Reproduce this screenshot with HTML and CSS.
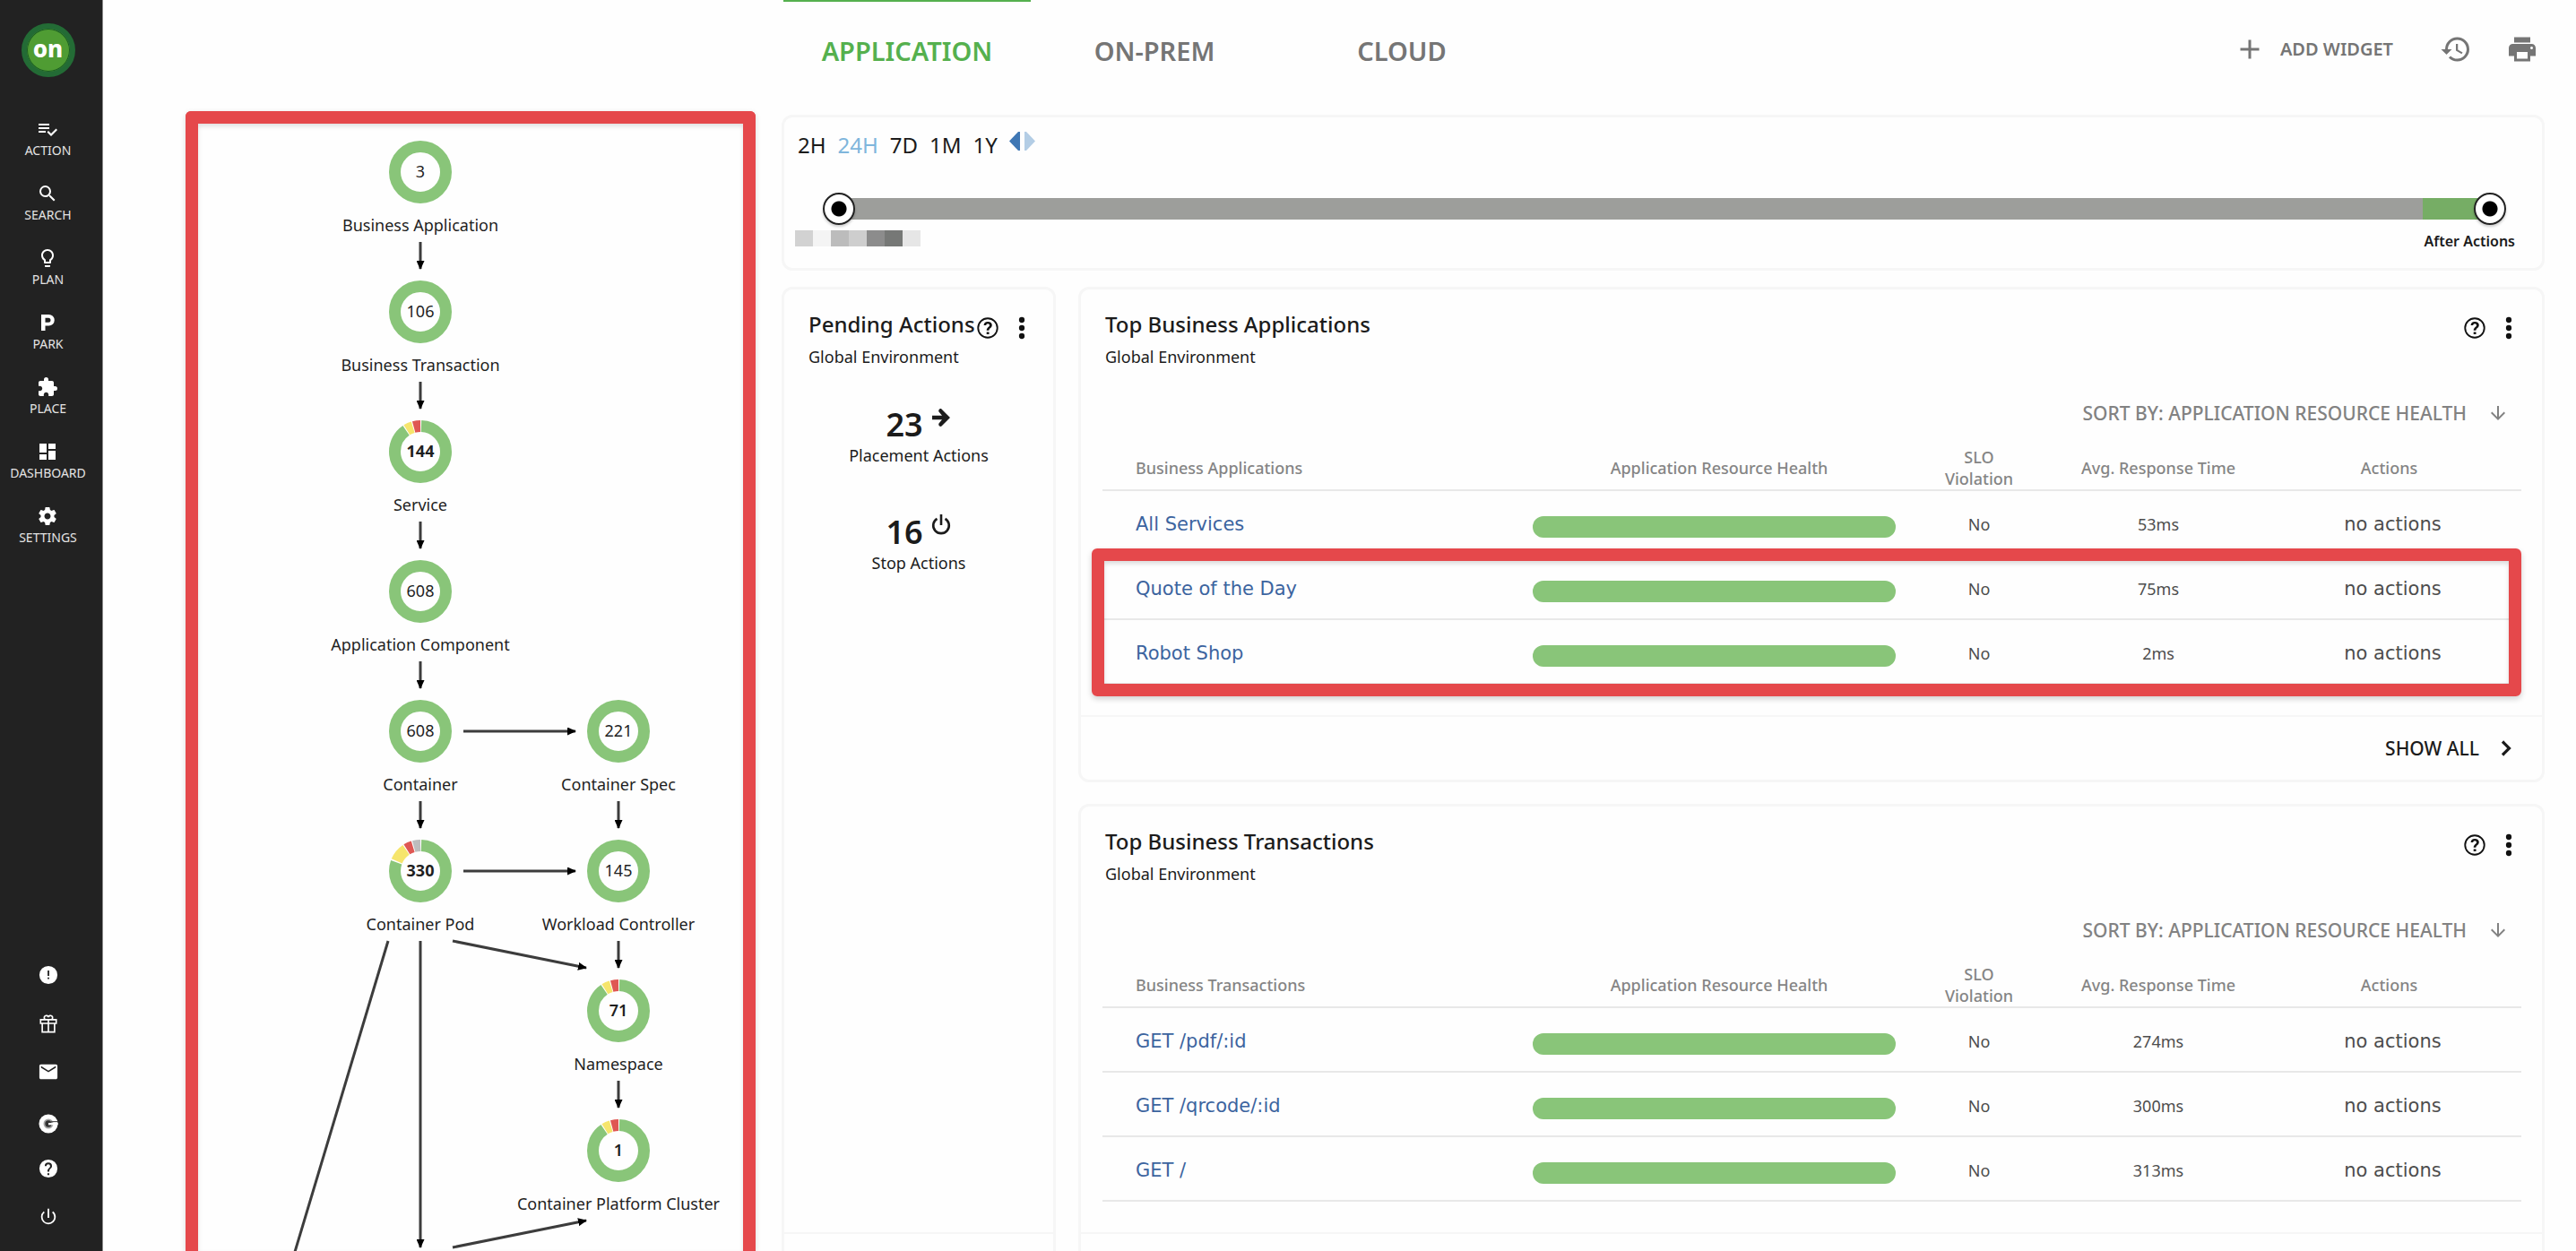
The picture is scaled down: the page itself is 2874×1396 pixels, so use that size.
FILE: index.html
```html
<!DOCTYPE html>
<html lang="en">
<head>
<meta charset="utf-8">
<meta name="viewport" content="width=device-width, initial-scale=1">
<title>Application dashboard</title>
<link rel="stylesheet" href="styles.css">
</head>
<body>
<svg class="defs" width="0" height="0" aria-hidden="true">
  <symbol id="i-help" viewBox="0 0 24 24"><path d="M12 2a10 10 0 1 0 0 20 10 10 0 0 0 0-20zm0 18.400a8.400 8.400 0 1 1 0-16.800 8.400 8.400 0 0 1 0 16.800z"/><path d="M10.900 15.800h2.400v2.200h-2.400zM12.100 6C9.800 6 8.200 7.400 8.200 9.500h2.300c0-1 .6-1.600 1.600-1.600s1.600.6 1.600 1.500c0 1.700-2.800 1.900-2.800 5h2.300c0-2 2.900-2.400 2.900-5.100C16.100 7.300 14.500 6 12.100 6z"/></symbol>
  <symbol id="i-more" viewBox="0 0 24 24"><circle cx="12" cy="6" r="2.100"/><circle cx="12" cy="12" r="2.100"/><circle cx="12" cy="18" r="2.100"/></symbol>
  <symbol id="i-down" viewBox="0 0 24 24"><path d="M20 12l-1.410-1.410L13 16.170V4h-2v12.170l-5.580-5.590L4 12l8 8 8-8z"/></symbol>
  <symbol id="i-next" viewBox="0 0 24 24"><path d="M8 4.500l7.500 7.500L8 19.500" fill="none" stroke="currentColor" stroke-width="3.200"/></symbol>
  <symbol id="ring" viewBox="-35 -35 70 70"><circle r="28.500" fill="none" stroke="#89c579" stroke-width="13"/></symbol>
  <symbol id="ring-warn" viewBox="-35 -35 70 70">
    <g fill="none" stroke-width="13" transform="rotate(-90)">
      <circle r="28.500" pathLength="360" stroke="#89c579" stroke-dasharray="324 36" stroke-dashoffset="-2"/>
      <circle r="28.500" pathLength="360" stroke="#f6e56c" stroke-dasharray="15 345" stroke-dashoffset="-328"/>
      <circle r="28.500" pathLength="360" stroke="#df5753" stroke-dasharray="15 345" stroke-dashoffset="-345"/>
    </g>
  </symbol>
  <symbol id="ring-pod" viewBox="-35 -35 70 70">
    <g fill="none" stroke-width="13" transform="rotate(-90)">
      <circle r="28.500" pathLength="360" stroke="#89c579" stroke-dasharray="288 72" stroke-dashoffset="-2"/>
      <circle r="28.500" pathLength="360" stroke="#f6e56c" stroke-dasharray="33 327" stroke-dashoffset="-293"/>
      <circle r="28.500" pathLength="360" stroke="#df5753" stroke-dasharray="15 345" stroke-dashoffset="-328"/>
      <circle r="28.500" pathLength="360" stroke="#bdbdbd" stroke-dasharray="15 345" stroke-dashoffset="-345"/>
    </g>
  </symbol>
</svg>

<div class="shell">
  <aside class="sidebar">
    <a class="logo" href="#" aria-label="Home"><span class="logo-text">on</span></a>
    <nav class="nav">
      <a class="nav-item" href="#"><svg viewBox="0 0 24 24"><path d="M14 10H2v2h12v-2zm0-4H2v2h12V6zM2 16h8v-2H2v2zm19.500-4.500L23 13l-6.990 7-4.510-4.500L13 14l3.010 3 5.490-5.500z"/></svg>ACTION</a>
      <a class="nav-item" href="#"><svg viewBox="0 0 24 24"><path d="M15.500 14h-.79l-.28-.27A6.470 6.470 0 0 0 16 9.500 6.500 6.500 0 1 0 9.500 16c1.610 0 3.090-.59 4.230-1.570l.27.28v.79l5 4.990L20.490 19l-4.990-5zm-6 0C7.010 14 5 11.990 5 9.500S7.010 5 9.500 5 14 7.010 14 9.500 11.990 14 9.500 14z"/></svg>SEARCH</a>
      <a class="nav-item" href="#"><svg viewBox="0 0 24 24"><path d="M9 21c0 .55.45 1 1 1h4c.55 0 1-.45 1-1v-1H9v1zm3-19C8.140 2 5 5.140 5 9c0 2.380 1.190 4.470 3 5.740V17c0 .55.45 1 1 1h6c.55 0 1-.45 1-1v-2.260c1.810-1.270 3-3.360 3-5.740 0-3.860-3.140-7-7-7zm2.850 11.100l-.85.6V16h-4v-2.300l-.85-.6A4.997 4.997 0 0 1 7 9c0-2.760 2.240-5 5-5s5 2.240 5 5c0 1.630-.8 3.160-2.150 4.100z"/></svg>PLAN</a>
      <a class="nav-item" href="#"><svg viewBox="0 0 24 24"><path d="M5 3h8.500a6 6 0 0 1 0 12.500H9.500V21H5zM9.500 6.800v5H13a2.500 2.500 0 0 0 0-5z"/></svg>PARK</a>
      <a class="nav-item" href="#"><svg viewBox="0 0 24 24"><path d="M20.500 11H19V7c0-1.100-.9-2-2-2h-4V3.500a2.500 2.500 0 0 0-5 0V5H4c-1.100 0-1.990.9-1.990 2v3.800H3.500c1.490 0 2.700 1.210 2.700 2.700s-1.210 2.700-2.700 2.700H2V20c0 1.100.9 2 2 2h3.800v-1.500c0-1.490 1.210-2.700 2.700-2.700 1.490 0 2.700 1.210 2.700 2.700V22H17c1.100 0 2-.9 2-2v-4h1.500a2.500 2.500 0 0 0 0-5z"/></svg>PLACE</a>
      <a class="nav-item" href="#"><svg viewBox="0 0 24 24"><path d="M3 13h8V3H3v10zm0 8h8v-6H3v6zm10 0h8V11h-8v10zm0-18v6h8V3h-8z"/></svg>DASHBOARD</a>
      <a class="nav-item" href="#"><svg viewBox="0 0 24 24"><path d="M19.430 12.980c.04-.32.07-.64.07-.98s-.03-.66-.07-.98l2.110-1.650c.19-.15.24-.42.12-.64l-2-3.460c-.12-.22-.39-.3-.61-.22l-2.490 1c-.52-.4-1.080-.73-1.690-.98l-.38-2.650A.488.488 0 0 0 14 2h-4c-.25 0-.46.18-.49.42l-.38 2.650c-.61.25-1.170.59-1.690.98l-2.490-1c-.23-.09-.49 0-.61.22l-2 3.460c-.13.22-.07.49.12.64l2.110 1.650c-.04.32-.07.65-.07.98s.03.66.07.98l-2.110 1.650c-.19.15-.24.42-.12.64l2 3.460c.12.22.39.3.61.22l2.490-1c.52.4 1.080.73 1.690.98l.38 2.650c.03.24.24.42.49.42h4c.25 0 .46-.18.49-.42l.38-2.650c.61-.25 1.170-.59 1.690-.98l2.490 1c.23.09.49 0 .61-.22l2-3.460c.12-.22.07-.49-.12-.64l-2.110-1.650zM12 15.500c-1.930 0-3.500-1.570-3.500-3.500s1.570-3.500 3.500-3.500 3.500 1.570 3.500 3.500-1.570 3.500-3.500 3.500z"/></svg>SETTINGS</a>
    </nav>
    <div class="tools">
      <button class="tool" aria-label="Alerts"><svg viewBox="0 0 24 24"><path fill-rule="evenodd" d="M12 1a11 11 0 1 0 0 22 11 11 0 0 0 0-22zm-1 5.500h2v6.500h-2zm0 8.500h2v2h-2z"/></svg></button>
      <button class="tool" aria-label="What's new"><svg class="outline" viewBox="0 0 24 24" stroke-width="1.800"><path d="M2.500 7.500h19v4.500h-19zM4.500 12h15v10.500h-15zM12 7.500v15M12 7.500H8.500a2.600 2.600 0 1 1 3.500-3 2.600 2.600 0 1 1 3.500 3z"/></svg></button>
      <button class="tool" aria-label="Messages"><svg viewBox="0 0 24 24"><path d="M21 3H3c-1.100 0-2 .9-2 2v14c0 1.100.9 2 2 2h18c1.100 0 2-.9 2-2V5c0-1.100-.9-2-2-2zm0 4l-9 5.500L3 7V5l9 5.500L21 5v2z"/></svg></button>
      <button class="tool tool-low" aria-label="Community"><svg viewBox="0 0 24 24"><circle cx="12" cy="12" r="11.500"/><circle cx="12" cy="12" r="6" fill="#a5a5a5"/><circle cx="12" cy="12" r="4" fill="#333"/><path d="M12 11h11.500v2.500H12z"/><path d="M14 8.700h9v1.300h-9z" fill="#555"/></svg></button>
      <button class="tool" aria-label="Help"><svg viewBox="0 0 24 24"><path d="M12 1a11 11 0 1 0 0 22 11 11 0 0 0 0-22zm1.100 19h-2.300v-2.300h2.300zm2.300-8.600l-1 1c-.8.9-1.300 1.600-1.300 3.300h-2.300v-.6c0-1.200.5-2.300 1.300-3.100l1.400-1.400c.4-.4.600-.9.600-1.500a2.200 2.200 0 0 0-4.400 0H7.500a4.400 4.400 0 0 1 8.900 0c0 .9-.4 1.700-1 2.300z"/></svg></button>
      <button class="tool" aria-label="Log out"><svg viewBox="0 0 24 24"><path d="M13 2h-2v11h2V2zm4.830 3.170l-1.420 1.420A6.920 6.920 0 0 1 19 12c0 3.870-3.130 7-7 7A6.995 6.995 0 0 1 7.580 6.580L6.170 5.170A8.932 8.932 0 0 0 3 12a9 9 0 0 0 18 0c0-2.740-1.230-5.180-3.170-6.830z"/></svg></button>
    </div>
  </aside>

  <section class="map" aria-label="Supply chain">
    <svg class="map-canvas" viewBox="221 137 608 1500" width="608" height="1500">
      <defs>
        <marker id="head" viewBox="0 0 10 9" refX="9" refY="4.500" markerWidth="10" markerHeight="9" markerUnits="userSpaceOnUse" orient="auto"><path d="M0 0l10 4.500L0 9z" fill="#000"/></marker>
      </defs>
      <g class="edges" marker-end="url(#head)">
        <path d="M469 269V299"/><path d="M469 425V455"/><path d="M469 581V611"/><path d="M469 737V767"/><path d="M469 893V923"/>
        <path d="M690 893V923"/><path d="M690 1049V1079"/><path d="M690 1205V1235"/>
        <path d="M517 815H642"/><path d="M517 971H642"/>
        <path d="M505 1049L654 1079"/><path d="M469 1049V1391"/><path d="M505 1391L654 1361"/><path d="M433 1049L299 1496"/>
      </g>
      <use href="#ring" x="434" y="156" width="70" height="70"/>
      <use href="#ring" x="434" y="312" width="70" height="70"/>
      <use href="#ring-warn" x="434" y="468" width="70" height="70"/>
      <use href="#ring" x="434" y="624" width="70" height="70"/>
      <use href="#ring" x="434" y="780" width="70" height="70"/>
      <use href="#ring-pod" x="434" y="936" width="70" height="70"/>
      <use href="#ring" x="655" y="780" width="70" height="70"/>
      <use href="#ring" x="655" y="936" width="70" height="70"/>
      <use href="#ring-warn" x="655" y="1092" width="70" height="70"/>
      <use href="#ring-warn" x="655" y="1248" width="70" height="70"/>
      <g class="node-text">
        <text x="469" y="197">3</text><text x="469" y="257">Business Application</text>
        <text x="469" y="353">106</text><text x="469" y="413">Business Transaction</text>
        <text class="strong" x="469" y="509">144</text><text x="469" y="569">Service</text>
        <text x="469" y="665">608</text><text x="469" y="725">Application Component</text>
        <text x="469" y="821">608</text><text x="469" y="881">Container</text>
        <text class="strong" x="469" y="977">330</text><text x="469" y="1037">Container Pod</text>
        <text x="690" y="821">221</text><text x="690" y="881">Container Spec</text>
        <text x="690" y="977">145</text><text x="690" y="1037">Workload Controller</text>
        <text class="medium" x="690" y="1133">71</text><text x="690" y="1193">Namespace</text>
        <text class="medium" x="690" y="1289">1</text><text x="690" y="1349">Container Platform Cluster</text>
      </g>
    </svg>
  </section>

  <main class="main">
    <header class="topbar">
      <nav class="tabs">
        <a class="tab tab-active" href="#" aria-current="page">APPLICATION</a>
        <a class="tab" href="#">ON-PREM</a>
        <a class="tab" href="#">CLOUD</a>
      </nav>
      <div class="page-actions">
        <button class="add"><svg viewBox="0 0 24 24"><path d="M19 13h-6v6h-2v-6H5v-2h6V5h2v6h6v2z"/></svg>ADD WIDGET</button>
        <button aria-label="Reset"><svg viewBox="0 0 24 24"><path d="M13 3a9 9 0 0 0-9 9H1l3.890 3.890.07.14L9 12H6c0-3.870 3.130-7 7-7s7 3.130 7 7-3.130 7-7 7c-1.930 0-3.680-.79-4.940-2.060l-1.420 1.420A8.954 8.954 0 0 0 13 21a9 9 0 0 0 0-18zm-1 5v5l4.280 2.540.72-1.210-3.500-2.080V8H12z"/></svg></button>
        <button aria-label="Print"><svg viewBox="0 0 24 24"><path d="M19 8H5c-1.660 0-3 1.340-3 3v6h4v4h12v-4h4v-6c0-1.660-1.340-3-3-3zm-3 11H8v-5h8v5zm3-7c-.55 0-1-.45-1-1s.45-1 1-1 1 .45 1 1-.45 1-1 1zm-1-9H6v4h12V3z"/></svg></button>
      </div>
    </header>

    <section class="card timeline">
      <div class="ranges">
        <button>2H</button><button class="range-on">24H</button><button>7D</button><button>1M</button><button>1Y</button>
        <button class="step" aria-label="Step through time"><svg viewBox="0 0 29 21" width="29" height="21"><path d="M12 0v21h-2L0 10.500 10 0z" fill="#3f77b4"/><path d="M17 0v21h2l10-10.500L19 0z" fill="#b3cde5"/></svg></button>
      </div>
      <div class="slider">
        <div class="track"><span class="track-after"></span></div>
        <input type="range" aria-label="Start of period" min="0" max="100" value="0">
        <input type="range" aria-label="End of period" min="0" max="100" value="100">
      </div>
      <div class="legend">
        <div class="masked"><i></i><i></i><i></i><i></i><i></i><i></i><i></i></div>
        <span class="after">After Actions</span>
      </div>
    </section>

    <div class="board">
      <section class="card pending">
        <header class="card-head">
          <div><h2>Pending Actions</h2><p>Global Environment</p></div>
          <div class="card-tools"><button aria-label="Help"><svg class="help"><use href="#i-help"/></svg></button><button aria-label="More"><svg class="more"><use href="#i-more"/></svg></button></div>
        </header>
        <div class="counts">
          <div class="count">
            <div class="count-value">23<svg viewBox="0 0 24 24"><path d="M2 9.800h11L9.500 5.500C8.500 4.200 10.500.8 12.500 2.500L22 12l-9.500 9.500c-2 1.700-4-1.700-3-3l3.500-4.300H2z"/></svg></div>
            <span>Placement Actions</span>
          </div>
          <div class="count">
            <div class="count-value">16<svg class="outline" viewBox="0 0 24 24" stroke-width="2.600"><path d="M12 0v12M7.500 4.800a8.800 8.800 0 1 0 9 0"/></svg></div>
            <span>Stop Actions</span>
          </div>
        </div>
        <footer class="card-foot"></footer>
      </section>

      <section class="card">
        <header class="card-head">
          <div><h2>Top Business Applications</h2><p>Global Environment</p></div>
          <div class="card-tools"><button aria-label="Help"><svg class="help"><use href="#i-help"/></svg></button><button aria-label="More"><svg class="more"><use href="#i-more"/></svg></button></div>
        </header>
        <button class="sort">SORT BY: APPLICATION RESOURCE HEALTH<svg><use href="#i-down"/></svg></button>
        <div class="table-wrap">
          <table>
            <colgroup><col><col class="c-health"><col class="c-slo"><col class="c-time"><col class="c-actions"></colgroup>
            <thead><tr><th>Business Applications</th><th>Application Resource Health</th><th>SLO<br>Violation</th><th>Avg. Response Time</th><th>Actions</th></tr></thead>
            <tbody>
              <tr><td><a href="#">All Services</a></td><td><div class="bar"></div></td><td>No</td><td>53ms</td><td>no actions</td></tr>
              <tr><td><a href="#">Quote of the Day</a></td><td><div class="bar"></div></td><td>No</td><td>75ms</td><td>no actions</td></tr>
              <tr><td><a href="#">Robot Shop</a></td><td><div class="bar"></div></td><td>No</td><td>2ms</td><td>no actions</td></tr>
            </tbody>
          </table>
          <div class="callout"></div>
        </div>
        <footer class="card-foot"><a class="show-all" href="#">SHOW ALL<svg><use href="#i-next"/></svg></a></footer>
      </section>

      <section class="card">
        <header class="card-head">
          <div><h2>Top Business Transactions</h2><p>Global Environment</p></div>
          <div class="card-tools"><button aria-label="Help"><svg class="help"><use href="#i-help"/></svg></button><button aria-label="More"><svg class="more"><use href="#i-more"/></svg></button></div>
        </header>
        <button class="sort">SORT BY: APPLICATION RESOURCE HEALTH<svg><use href="#i-down"/></svg></button>
        <div class="table-wrap">
          <table>
            <colgroup><col><col class="c-health"><col class="c-slo"><col class="c-time"><col class="c-actions"></colgroup>
            <thead><tr><th>Business Transactions</th><th>Application Resource Health</th><th>SLO<br>Violation</th><th>Avg. Response Time</th><th>Actions</th></tr></thead>
            <tbody>
              <tr><td><a href="#">GET /pdf/:id</a></td><td><div class="bar"></div></td><td>No</td><td>274ms</td><td>no actions</td></tr>
              <tr><td><a href="#">GET /qrcode/:id</a></td><td><div class="bar"></div></td><td>No</td><td>300ms</td><td>no actions</td></tr>
              <tr><td><a href="#">GET /</a></td><td><div class="bar"></div></td><td>No</td><td>313ms</td><td>no actions</td></tr>
            </tbody>
          </table>
        </div>
        <footer class="card-foot"></footer>
      </section>
    </div>
  </main>
</div>
</body>
</html>
```
FILE: styles.css
```css
:root {
  --red: #e5484b;
  --green: #89c579;
  --line: #e8e8e8;
  --card-line: #f6f6f6;
}

* { box-sizing: border-box; }

body {
  margin: 0;
  background: #fefefe;
  color: #1b1b1b;
  font: 18px/24px "Noto Sans", "Open Sans", sans-serif;
}

button {
  margin: 0;
  padding: 0;
  border: 0;
  background: none;
  color: inherit;
  font: inherit;
  cursor: pointer;
}

a { text-decoration: none; }
svg { display: block; fill: currentColor; flex: none; }
.outline { fill: none; stroke: currentColor; }
.defs { position: absolute; }

.shell {
  display: flex;
  height: 100vh;
  overflow: hidden;
}

/* Sidebar */
.sidebar {
  flex: none;
  width: 115px;
  padding: 26px 7px 11px 0;
  display: flex;
  flex-direction: column;
  align-items: center;
  background: #222;
  border-right: 1px solid #8a8a8a;
  color: #fff;
}

.logo {
  width: 60px;
  height: 60px;
  border: 6px solid #236b35;
  border-radius: 50%;
  background: #4f9c33;
  box-shadow: inset 0 0 0 1px #1c5e22;
  color: #fff;
  display: grid;
  place-items: center;
}

.logo-text {
  font: 800 26px/32px "Noto Sans", sans-serif;
  padding-bottom: 4px;
}

.nav {
  margin-top: 46px;
  display: flex;
  flex-direction: column;
  gap: 26px;
}

.nav-item {
  display: flex;
  flex-direction: column;
  align-items: center;
  gap: 2px;
  color: #e4e4e4;
  font-size: 14px;
  line-height: 20px;
}

.nav-item svg { width: 24px; height: 24px; color: #fff; }

.tools { margin-top: auto; }

.tool {
  display: grid;
  place-items: center;
  width: 54px;
  height: 54px;
}

.tool svg { width: 22px; height: 22px; }
.tool-low { padding-top: 8px; }

/* Supply chain map */
.map {
  flex: none;
  width: 636px;
  margin: 124px 29px 0 92px;
  border: 14px solid var(--red);
  border-bottom: 0;
  border-radius: 6px 6px 0 0;
  box-shadow: 0 2px 6px rgba(0, 0, 0, .15), inset 0 3px 5px rgba(0, 0, 0, .12);
  overflow: hidden;
}

.edges { fill: none; stroke: #3c3c3c; stroke-width: 3px; }
.node-text { font-size: 18px; text-anchor: middle; fill: #1f1f1f; }
.strong { font-weight: 700; }
.medium { font-weight: 600; }

/* Top bar */
.main {
  flex: 1;
  min-width: 0;
  padding-right: 35px;
}

.topbar {
  display: flex;
  justify-content: space-between;
  height: 128px;
}

.tabs { display: flex; margin-left: 2px; }

.tab {
  width: 276px;
  height: 112px;
  border-top: 2px solid transparent;
  display: grid;
  place-items: center;
  color: #757575;
  font-size: 29px;
  font-weight: 600;
}

.tab-active { border-color: #55b04e; color: #55b04e; }

.page-actions {
  display: flex;
  align-items: center;
  height: 109px;
  padding-right: 7px;
  gap: 38px;
  color: #757575;
  font-size: 20px;
  font-weight: 600;
}

.page-actions svg { width: 36px; height: 36px; }
.add { display: flex; align-items: center; gap: 16px; margin-right: 14px; }

/* Cards */
.card {
  border: 3px solid var(--card-line);
  border-radius: 12px;
  background: #fefefe;
}

.timeline { padding: 16px 12px 18px; }

.ranges {
  display: flex;
  align-items: center;
  gap: 13px;
  padding-left: 3px;
  font-size: 24px;
  line-height: 30px;
}

.range-on { color: #7fb6dc; }
.step { padding-bottom: 9px; }

.slider {
  display: grid;
  margin: 38px 28px 0 31px;
}

.slider > * { grid-area: 1 / 1; }

.track {
  align-self: center;
  display: flex;
  justify-content: flex-end;
  height: 24px;
  margin: 0 18px;
  background: #9d9e9b;
}

.track-after { width: 75px; background: #76ad65; }

.slider input {
  appearance: none;
  width: 100%;
  height: 36px;
  margin: 0;
  background: none;
  pointer-events: none;
}

.slider input::-webkit-slider-thumb {
  appearance: none;
  width: 36px;
  height: 36px;
  border: 2px solid #222;
  border-radius: 50%;
  background: radial-gradient(circle, #000 8px, #fff 9px);
  box-shadow: 0 2px 3px rgba(0, 0, 0, .2);
  pointer-events: auto;
}

.legend {
  display: flex;
  justify-content: space-between;
  margin-top: 6px;
  padding-right: 18px;
  line-height: 18px;
}

.masked { display: flex; }
.masked i { width: 20px; height: 18px; background: #d2d2d2; }
.masked i:nth-child(2) { background: #f4f4f4; }
.masked i:nth-child(3) { background: #bcbcbc; }
.masked i:nth-child(4) { background: #cecece; }
.masked i:nth-child(5) { background: #8c8c8c; }
.masked i:nth-child(6) { background: #767876; }
.masked i:nth-child(7) { background: #e6e6e6; }
.after { font-size: 16px; line-height: 24px; font-weight: 600; }

.board {
  display: grid;
  grid-template-columns: 306px 1fr;
  gap: 24px 25px;
  margin-top: 18px;
}

.pending { grid-row: span 2; display: flex; flex-direction: column; }

.card-head {
  display: flex;
  justify-content: space-between;
  padding: 23px 19px 0 27px;
}

.card-head h2 { margin: 0; font-size: 24px; line-height: 32px; font-weight: 500; white-space: nowrap; }
.card-head p { margin: 8px 0 0; }
.card-tools { display: flex; align-items: center; gap: 6px; height: 40px; color: #111; }
.help { width: 28px; height: 28px; }
.more { width: 36px; height: 36px; }

.counts {
  display: flex;
  flex-direction: column;
  gap: 52px;
  margin-top: 44px;
}

.count { text-align: center; line-height: 28px; }

.count-value {
  display: flex;
  justify-content: center;
  gap: 8px;
  font-size: 36px;
  line-height: 40px;
  font-weight: 600;
}

.count-value svg { width: 24px; height: 24px; }

.sort {
  display: flex;
  align-items: center;
  gap: 23px;
  margin: 35px 37px 0 auto;
  color: #828282;
  font-size: 21px;
  line-height: 32px;
  font-weight: 500;
}

.sort svg { width: 24px; height: 24px; }

/* Tables */
.table-wrap { position: relative; margin: 21px 23px 0 24px; }

table {
  width: 100%;
  table-layout: fixed;
  border-collapse: separate;
  border-spacing: 0;
}

.c-health { width: 416px; }
.c-slo { width: 164px; }
.c-time { width: 236px; }
.c-actions { width: 287px; }

th, td { padding: 0; border-bottom: 2px solid var(--line); text-align: center; }
th { height: 50px; color: #858585; font-weight: 500; }
td { height: 72px; padding-top: 4px; color: #4d4d4d; }
th:first-child, td:first-child { padding-left: 37px; text-align: left; }
th:last-child { padding-right: 8px; }
td:first-child, td:last-child { font-family: "DejaVu Sans", sans-serif; font-size: 21px; }
td a { color: #3c649f; }

.bar {
  height: 24px;
  margin: 6px 11px 0 0;
  border-radius: 12px;
  background: var(--green);
}

/* Highlight drawn over the last two rows */
.callout {
  position: absolute;
  inset: auto 0 -13px -12px;
  height: 165px;
  border: 14px solid var(--red);
  border-radius: 6px;
  box-shadow: 0 3px 6px rgba(0, 0, 0, .18), inset 0 3px 5px rgba(0, 0, 0, .14);
  pointer-events: none;
}

.card-foot {
  display: flex;
  align-items: center;
  justify-content: flex-end;
  height: 72px;
  margin-top: 34px;
  padding-right: 28px;
  border-top: 2px solid var(--card-line);
}

.pending .card-foot { margin-top: auto; }

.show-all {
  display: flex;
  align-items: center;
  gap: 18px;
  color: #1b1b1b;
  font-size: 21px;
  font-weight: 500;
}

.show-all svg { width: 24px; height: 24px; }
```
